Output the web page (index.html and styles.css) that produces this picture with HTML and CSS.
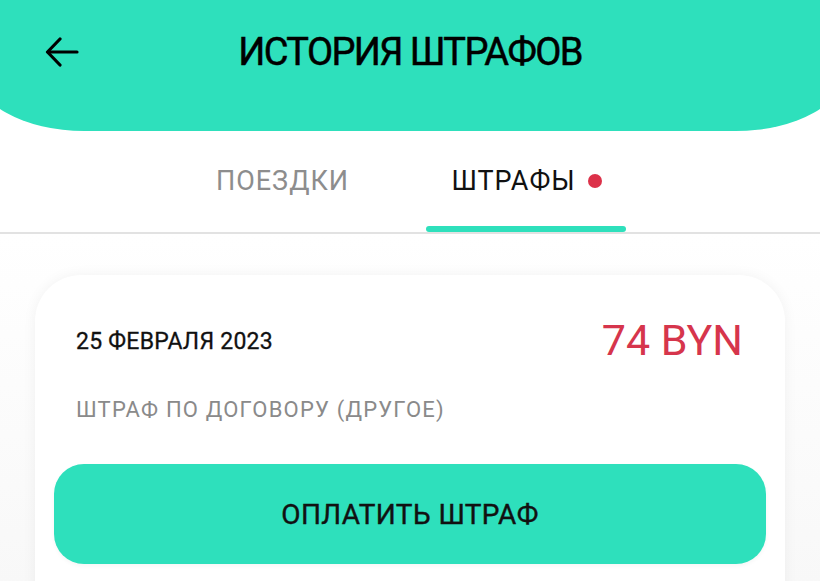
FILE: index.html
```html
<!DOCTYPE html>
<html lang="ru">
<head>
<meta charset="utf-8">
<title>История штрафов</title>
<link rel="stylesheet" href="styles.css">
</head>
<body>
<div class="screen">
  <header class="topbar">
    <button class="back" aria-label="Назад">
      <svg width="34" height="30" viewBox="0 0 34 30" fill="none" stroke="#000" stroke-width="3.2" stroke-linecap="round" stroke-linejoin="round">
        <path d="M32 15H3"/>
        <path d="M15 2L2.5 15L15 28"/>
      </svg>
    </button>
    <h1 class="title">ИСТОРИЯ ШТРАФОВ</h1>
    <span class="spacer"></span>
  </header>

  <nav class="tabs">
    <div class="tab">
      <span class="tab-label">ПОЕЗДКИ</span>
      <span class="tab-bar"></span>
    </div>
    <div class="tab active">
      <span class="tab-label">ШТРАФЫ <span class="dot"></span></span>
      <span class="tab-bar"></span>
    </div>
  </nav>

  <main class="content">
    <section class="card">
      <div class="info">
        <div class="row">
          <span class="date">25 ФЕВРАЛЯ 2023</span>
          <span class="amount">74 BYN</span>
        </div>
        <div class="reason">ШТРАФ ПО ДОГОВОРУ (ДРУГОЕ)</div>
      </div>
      <button class="pay">ОПЛАТИТЬ ШТРАФ</button>
    </section>
  </main>
</div>
</body>
</html>
```

FILE: styles.css
```css
* { box-sizing: border-box; }
html, body {
  margin: 0;
  padding: 0;
  width: 820px;
  height: 581px;
  overflow: hidden;
  font-family: Roboto, "Liberation Sans", sans-serif;
  background: #ffffff;
}
.screen {
  width: 820px;
  height: 581px;
  display: flex;
  flex-direction: column;
  overflow: hidden;
  background: #ffffff;
}
.topbar {
  flex: 0 0 131px;
  margin: 0 -26px;
  padding: 20px 71px 0;
  background: #2ee0bc;
  border-radius: 0 0 110px 110px / 0 0 62px 62px;
  display: flex;
  align-items: flex-start;
}
.back {
  width: 34px;
  height: 64px;
  padding: 0;
  border: 0;
  background: none;
  display: flex;
  align-items: center;
}
.spacer { width: 34px; }
.title {
  flex: 1;
  margin: 0;
  height: 64px;
  line-height: 64px;
  text-align: center;
  font-size: 38px;
  font-weight: 400;
  letter-spacing: -1.6px;
  color: #000;
  -webkit-text-stroke: 0.5px #000;
}
.tabs {
  flex: 0 0 103px;
  background: #fff;
  display: flex;
  justify-content: center;
  gap: 43px;
  border-bottom: 2px solid #e2e2e2;
  padding-right: 12px;
}
.tab {
  width: 200px;
  display: flex;
  flex-direction: column;
  align-items: center;
}
.tab-label {
  flex: 1;
  display: flex;
  align-items: center;
  gap: 12px;
  font-size: 27px;
  color: #8d8d8d;
  letter-spacing: 1px;
  padding-top: 4px;
}
.tab.active .tab-label { color: #111; padding-left: 2px; }
.dot {
  width: 14px;
  height: 14px;
  border-radius: 50%;
  background: #dc3149;
}
.tab-bar {
  width: 100%;
  height: 6px;
  border-radius: 3px;
}
.tab.active .tab-bar { background: #2ee0bc; }
.content {
  flex: 1;
  padding: 41px 35px 0;
  background: linear-gradient(#ffffff, #f7f7f7);
}
.card {
  background: #fff;
  border-radius: 46px;
  padding: 40px 19px 30px;
  box-shadow: 0 0 14px rgba(0, 0, 0, 0.05);
  height: 360px;
}
.info { padding: 0 22px; }
.row {
  height: 50px;
  display: flex;
  justify-content: space-between;
  align-items: center;
}
.date {
  font-size: 23px;
  font-weight: 400;
  color: #111;
  letter-spacing: 0.25px;
  -webkit-text-stroke: 0.3px #111;
  padding-top: 2px;
}
.amount {
  font-size: 43px;
  color: #d6354c;
  letter-spacing: 0;
  padding-right: 1px;
}
.reason {
  margin-top: 30px;
  line-height: 30px;
  font-size: 22px;
  color: #8a8a8a;
  letter-spacing: 1.2px;
}
.pay {
  margin-top: 39px;
  width: 100%;
  height: 100px;
  border: 0;
  border-radius: 30px;
  background: #2ee0bc;
  font-family: Roboto, "Liberation Sans", sans-serif;
  font-size: 28px;
  font-weight: 400;
  color: #111;
  letter-spacing: 0.4px;
  -webkit-text-stroke: 0.4px #111;
  box-shadow: 0 2px 4px rgba(0, 0, 0, 0.04);
}
```
